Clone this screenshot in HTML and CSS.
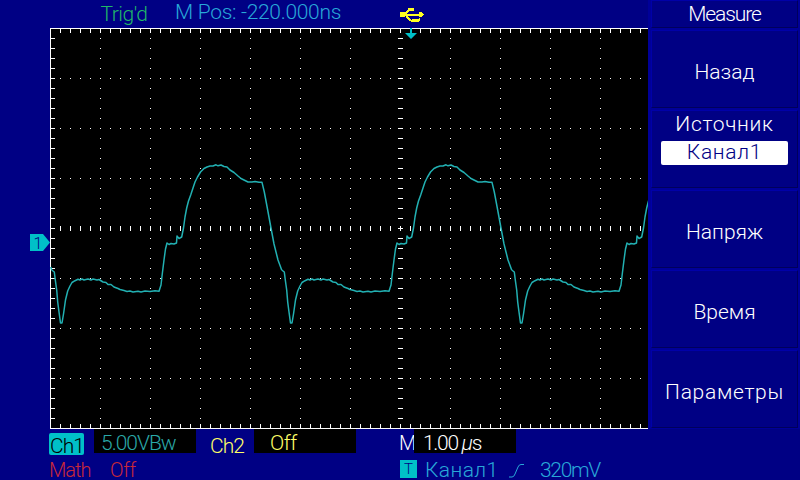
FILE: index.html
```
<!doctype html>
<html lang=ru >
<head>
<meta charset=utf-8 >
<title>Oscilloscope</title>
<meta name=viewport content='width=device-width,initial-scale=1' >
<link rel="stylesheet" href="styles.css">
</head>
<body>

	<div class=screen >

		<div class=main >

			<div class=topBar >
				<span class=trigState >Trig'd</span>
				<span class=mPos >M Pos: -220.000ns</span>
				<svg class=usb width=24 height=16 viewBox="0 0 24 16" >
					<rect x=0 y=5 width=5 height=5 />
					<path class=wire d="M4 8H20M5 7L8 4L10 2.5H13M6 8L8 11L11 13.5H14" />
					<rect x=8 y=1 width=6 height=3 />
					<path d="M12 12H18L20 11V13L18 15H12Z" />
					<path d="M19 5H21L24 7.5L21 10H19Z" />
				</svg>
			</div>

			<div class=scope >

				<div class=gutter >
					<svg class=chMarker width=20 height=17 viewBox="0 0 20 17" >
						<path d="M0 0H13L20 8.5L13 17H0Z" />
						<text x=3.5 y=14.5 >1</text>
					</svg>
				</div>

				<svg class=graph width=598 height=401 viewBox="0 0 598 401" >

					<g class=dots >
						<path d="M0 50.5H598M0 100.5H598M0 150.5H598M0 250.5H598M0 300.5H598M0 350.5H598" />
						<path d="M50.5 0V401M100.5 0V401M150.5 0V401M200.5 0V401M250.5 0V401M300.5 0V401M400.5 0V401M450.5 0V401M500.5 0V401M550.5 0V401" />
					</g>

					<g class=ticks >
						<path d="M0 2.5H598M0 200.5H598M0 398.5H598" />
						<path d="M2.5 0V401M350.5 0V401" />
					</g>

					<path class=frame d="M598 .5H.5V400.5H598" />

					<defs>
						<path id=period d="M1.7 242L4.3 244L5.3 252L6.7 262L7.7 274L9 284L10.5 295H12L13.5 286L15.5 272L17.7 263L20 258L22 254.5L25 252.7L28 251.3L30 252L32 251L34 252L38 251L41 252L43 251L47 252L49 251.5L53 254L56 254.5L58 256.5L61 256.5L64 259L68 260.5L70 261.5L74 262.5L77 263.5L80 263L83 264L88 263.2L91 264L95 263L100 263.5L105 262.7L109 263.3L111 257L112.5 244L114 232L115.5 221L117 215L119 216.5L121 215.5L124 216L126.5 215L127 208L129 210.5L131.7 209L133.5 200L135 189L136.7 180L138.5 173L140.7 167L143 160L145 154L147.5 149L150.5 144L154 140.5L157 139L160 138L163 138L166 136.8L168 137.8L171 137L174 138.5L177 139L180 142L184 144.5L188 148L191 150.5L195 152.5L198 154L202 154L205 153.5L209 154.3L212 154.3L214.3 164L217.3 180L221 200L224 216L228 232L231.7 242" />
					</defs>

					<g class=trace >
						<path d="M.7 239L1.7 242" />
						<use href=#period />
						<use href=#period x=230 />
						<use href=#period x=460 />
					</g>

				</svg>

				<svg class=trigPos width=12 height=11 viewBox="0 0 12 11" >
					<path d="M5 0H7V5H12L6 11L0 5H5Z" />
				</svg>

			</div>

			<div class=status >

				<div class=row >
					<span class=ch1 >Ch1</span>
					<span class="value v1" >5.00VBw</span>
					<span class=ch2 >Ch2</span>
					<span class="value v2" >Off</span>
					<span class=time >M</span>
					<span class="value vt" >1.00 <i>µ</i>s</span>
				</div>

				<div class="row second" >
					<span class=math >Math</span>
					<span class=mathOff >Off</span>
					<span class=trigBadge >T</span>
					<span class=trigSource >Канал1</span>
					<svg class=edge width=16 height=14 viewBox="0 0 16 14" >
						<path d="M0 13H3Q5 13 6 10L9 3Q10 .5 12 .5H15" />
					</svg>
					<span class=trigLevel >320mV</span>
				</div>

			</div>

		</div>

		<div class=menu >
			<div class="item title" ><span>Measure</span></div>
			<div class=item ><span>Назад</span></div>
			<div class="item source" ><span class=wide >Источник</span><span class="selected wide" >Канал1</span></div>
			<div class=item ><span>Напряж</span></div>
			<div class=item ><span>Время</span></div>
			<div class=item ><span class=wide >Параметры</span></div>
		</div>

	</div>

</body>
</html>
```
FILE: styles.css
```
html, body { height: 100%; margin: 0; overflow: hidden; }
body { background-color: #000084; color: #fff; font: 300 21px/24px Roboto, "Liberation Sans", sans-serif; }
svg { display: block; }

.screen { display: grid; grid-template-columns: 648px 152px; height: 480px; width: 800px; }
.main { display: grid; grid-template-rows: 28px 401px 51px; }

.topBar { display: flex; white-space: nowrap; }
.trigState { color: #20b868; letter-spacing: -.5px; margin: 2px 0 0 100.5px; width: 74.5px; }
.mPos { color: #28a8d8; letter-spacing: -.3px; width: 225px; }
.usb { fill: #ff2; margin-top: 7px; shape-rendering: crispEdges; }
.usb .wire { fill: none; stroke: #ff2; stroke-width: 2; }

.scope { display: grid; grid-template-columns: 50px 598px; position: relative; }
.gutter { padding: 206px 0 0 30px; }
.chMarker { fill: #00c0c8; overflow: visible; }
.chMarker text { fill: #000084; font-size: 16px; }
.graph { background-color: #000; shape-rendering: crispEdges; }
.dots, .ticks, .frame { fill: none; stroke: #fff; }
.dots { stroke-dasharray: 1 9; }
.ticks { stroke-dasharray: 1 9; stroke-width: 5; }
.trace { fill: none; shape-rendering: auto; stroke: #22b0b2; stroke-linejoin: round; stroke-width: 1.5; }
.trigPos { fill: #00c0c8; left: 405px; position: absolute; top: 0; }

.row { display: flex; height: 24px; letter-spacing: -1px; padding-left: 49px; white-space: nowrap; }
.value { background-color: #000; box-sizing: border-box; height: 24px; padding: 2px 0 0 7px; width: 102px; }
.ch1 { background-color: #00c0c8; border-radius: 2px; color: #000; height: 22px; letter-spacing: -.9px; line-height: 26px; margin: 4px 10px 0 0; text-indent: 1px; width: 35px; }
.v1 { color: #2aa8a8; }
.ch2 { color: #ff6; padding: 5px 0 0 14px; width: 44px; }
.v2 { color: #ff6; letter-spacing: -.5px; padding-left: 16px; }
.time { font-size: 20px; margin-left: 43px; padding-top: 2px; width: 15px; }
.vt { letter-spacing: -1.3px; padding-left: 9px; }

.second { height: 27px; line-height: 20px; }
.math, .mathOff { color: #c82838; font-size: 20px; height: 20px; margin-top: 7px; }
.math { width: 61px; }
.mathOff { letter-spacing: -.3px; width: 290px; }
.trigBadge { background-color: #00c0c8; color: #000084; font-size: 15px; height: 18px; letter-spacing: 0; line-height: 19px; margin: 7px 8px 0 0; text-align: center; width: 17px; }
.trigSource { color: #28a8d8; letter-spacing: .4px; padding-top: 7px; width: 84px; }
.edge { fill: none; margin-top: 11px; stroke: #28a8d8; }
.trigLevel { color: #28a8d8; letter-spacing: -1.3px; padding: 7px 0 0 15px; }

.menu { background-color: #000098; box-sizing: border-box; display: grid; grid-template-rows: 28px repeat(5, 78px); height: 429px; padding: 0 2px 0 3px; row-gap: 2px; }
.item { align-items: center; background-color: #000084; border: 1px solid; border-color: #0000a8 #00005c #00005c #0000a8; box-sizing: border-box; display: flex; flex-direction: column; padding-top: 29px; }
.title { letter-spacing: -1.1px; padding-top: 1px; }
.source { padding-top: 1px; }
.wide { letter-spacing: .7px; }
.selected { background-color: #fff; border-radius: 2px; color: #000084; height: 24px; line-height: 23px; margin-top: 5px; text-align: center; width: 127px; }
```
